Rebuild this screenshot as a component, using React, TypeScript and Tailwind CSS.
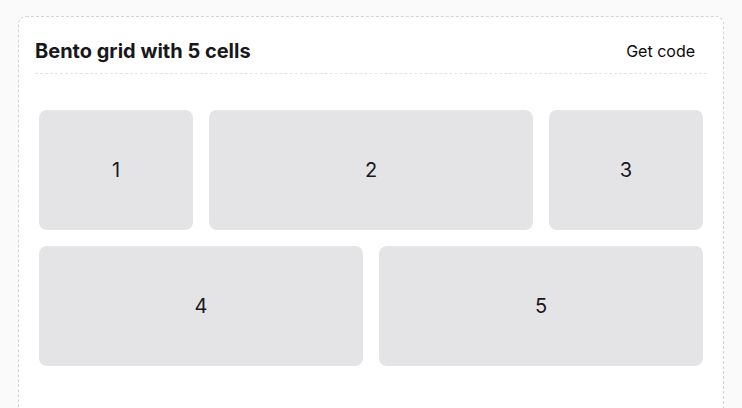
import React from "react";

const cells = [
  { label: "1", span: "col-span-1" },
  { label: "2", span: "col-span-2" },
  { label: "3", span: "col-span-1" },
  { label: "4", span: "col-span-2" },
  { label: "5", span: "col-span-2" },
];

export default function App() {
  return (
    <div className="h-[408px] overflow-hidden bg-[#fafafa] pt-4 pl-[18px] pr-[18px] font-['Inter',sans-serif] text-zinc-900">
      <div className="h-[420px] rounded-t-lg border border-dashed border-zinc-300 bg-white px-4">
        <div className="flex items-center justify-between border-b border-dashed border-zinc-200 pt-5 pb-2">
          <h2 className="text-[20px] font-bold leading-7">Bento grid with 5 cells</h2>
          <button className="mr-3 text-[16px] font-normal leading-7 text-zinc-950">Get code</button>
        </div>
        <div className="px-1 pt-9">
          <div className="grid grid-cols-4 gap-4">
            {cells.map((c) => (
              <div
                key={c.label}
                className={`${c.span} flex h-[120px] items-center justify-center rounded-lg bg-zinc-200 text-xl`}
              >
                {c.label}
              </div>
            ))}
          </div>
        </div>
      </div>
    </div>
  );
}
